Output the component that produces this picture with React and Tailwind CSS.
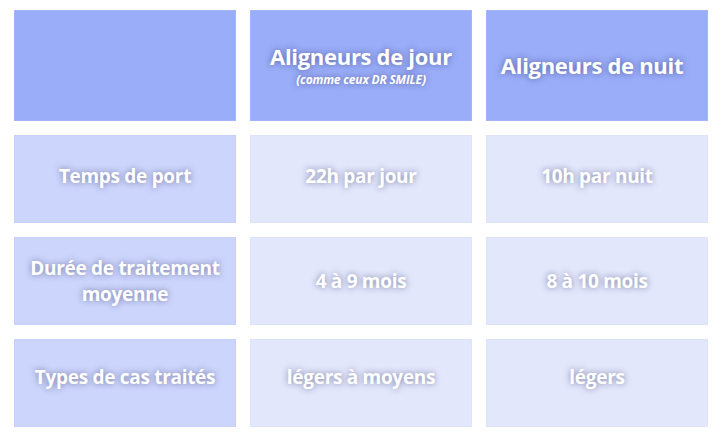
import React from 'react'

const rows = [
  { pad: 'pb-[7px]', cells: ['Temps de port', '22h par jour', '10h par nuit'] },
  { pad: 'pb-[1px]', cells: ['Durée de traitement moyenne', '4 à 9 mois', '8 à 10 mois'] },
  { pad: 'pb-[13px]', cells: ['Types de cas traités', 'légers à moyens', 'légers'] },
]

const shadow = '[text-shadow:0_0_6px_rgba(30,30,80,0.5)]'

export default function App() {
  return (
    <div className="w-[722px] h-[440px] bg-white px-[14px] pt-[10px] font-['Open_Sans',sans-serif]">
      <div className="grid grid-cols-3 gap-x-[14px] gap-y-[14px] grid-rows-[111px_88px_88px_88px]">
        {/* Header */}
        <div className="bg-[#9aadf9] border border-[#a3b5fa]" />
        <div className="bg-[#9aadf9] border border-[#a3b5fa] flex flex-col items-center justify-center pb-[2px] text-white">
          <div className={`text-[22px] font-bold leading-[30px] tracking-[-0.3px] ${shadow}`}>Aligneurs de jour</div>
          <div className={`text-[12px] font-bold italic leading-[17px] tracking-[-0.2px] ${shadow}`}>(comme ceux DR SMILE)</div>
        </div>
        <div className="bg-[#9aadf9] border border-[#a3b5fa] flex items-center justify-center text-white pb-[2px] pr-[10px]">
          <div className={`text-[22px] font-bold leading-[28px] tracking-[-0.3px] ${shadow}`}>Aligneurs de nuit</div>
        </div>

        {rows.map((row) =>
          row.cells.map((text, i) => (
            <div
              key={row.cells[0] + i}
              className={`${i === 0 ? 'bg-[#ccd5fc] border-[#c7d1fb]' : 'bg-[#e2e7fc] border-[#dde3fc]'} ${row.pad} border flex items-center justify-center text-center px-2`}
            >
              <span className={`text-white text-[19px] font-bold leading-[26px] tracking-[-0.3px] ${shadow}`}>{text}</span>
            </div>
          ))
        )}
      </div>
    </div>
  )
}
